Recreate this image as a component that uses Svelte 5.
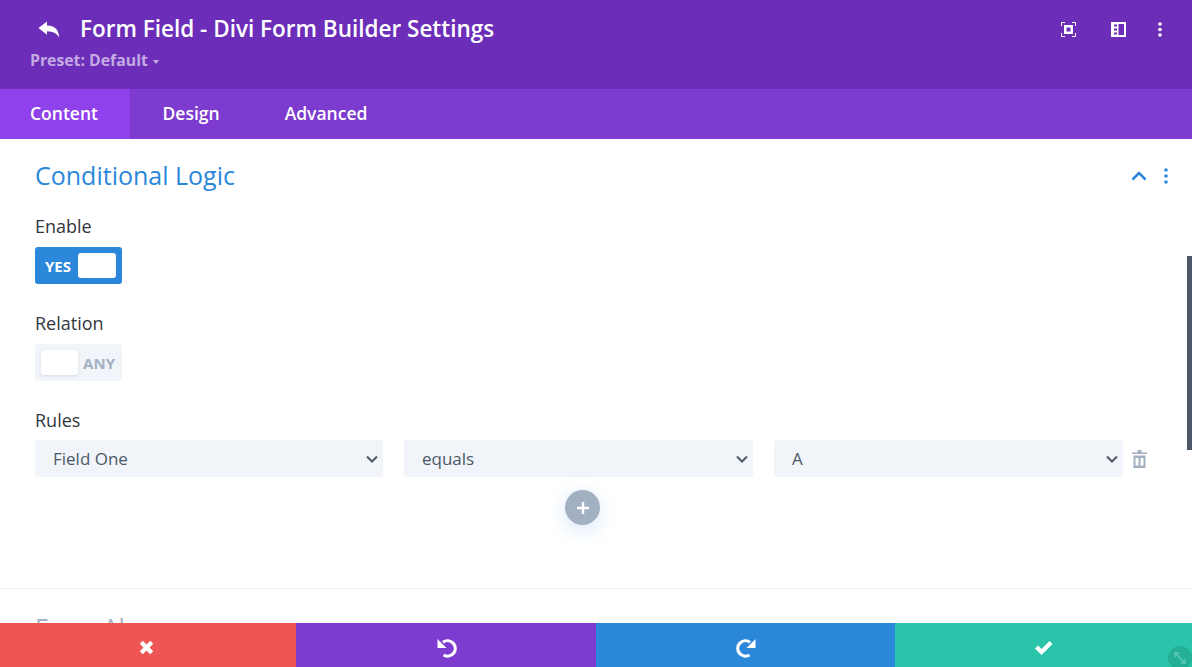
<script>
	let enabled = $state(true);

	const rules = [
		{ value: 'Field One', options: ['Field One', 'Field Two'] },
		{ value: 'equals', options: ['equals', 'does not equal'] },
		{ value: 'A', options: ['A', 'B', 'C'] }
	];
</script>

<div class="panel">
	<header class="head">
		<div class="title-row">
			<button class="icon back" aria-label="Back">
				<svg width="22" height="17" viewBox="0 0 22 17"><path fill="#fff" d="M0.5 7 9 0.5V4.6C16.5 4.8 21 8.5 21 16.5 18.8 12.4 15 10.4 9 10.3V13.8Z" /></svg>
			</button>
			<h1>Form Field - Divi Form Builder Settings</h1>
			<div class="actions">
				<button class="icon" aria-label="Focus">
					<svg width="15" height="15" viewBox="0 0 15 15" fill="none" stroke="#fff"><path d="M.5 4V.5H4M11 .5h3.500V4M14.500 11v3.500H11M4 14.500H.5V11" /><rect x="4.250" y="4.250" width="6.500" height="6.500" stroke-width="2.500" /></svg>
				</button>
				<button class="icon" aria-label="Sidebar">
					<svg width="15" height="15" viewBox="0 0 15 15"><path fill="#fff" fill-rule="evenodd" d="M0 0h15v15H0ZM7.500 2v11H13V2ZM3 2.500v2h3v-2ZM3 6.500v2h3v-2ZM3 10.500v2h3v-2Z" /></svg>
				</button>
				<button class="icon dots" aria-label="More">
					<svg width="4" height="15" viewBox="0 0 4 15" fill="#fff"><circle cx="2" cy="2" r="1.800" /><circle cx="2" cy="7.500" r="1.800" /><circle cx="2" cy="13" r="1.800" /></svg>
				</button>
			</div>
		</div>
		<div class="preset">Preset: Default <span class="caret"></span></div>
	</header>

	<nav class="tabs">
		<span class="tab active">Content</span>
		<span class="tab">Design</span>
		<span class="tab">Advanced</span>
	</nav>

	<main class="body">
		<section class="group">
			<div class="group-head">
				<h2>Conditional Logic</h2>
				<svg class="chevron" width="16" height="10" viewBox="0 0 16 10" fill="none" stroke="#2b87da" stroke-width="2.500"><path d="M1.500 8.500 8 2l6.500 6.500" /></svg>
				<svg width="4" height="16" viewBox="0 0 4 16" fill="#2b87da"><circle cx="2" cy="2" r="1.800" /><circle cx="2" cy="8" r="1.800" /><circle cx="2" cy="14" r="1.800" /></svg>
			</div>

			<div class="field">
				<span class="label">Enable</span>
				<button class="toggle on" onclick={() => (enabled = !enabled)}>
					<span class="toggle-text">YES</span>
					<span class="knob"></span>
				</button>
			</div>

			<div class="field">
				<span class="label">Relation</span>
				<button class="toggle">
					<span class="knob"></span>
					<span class="toggle-text">ANY</span>
				</button>
			</div>

			<div class="field">
				<span class="label">Rules</span>
				<div class="rule">
					<div class="selects">
						{#each rules as rule}
							<select value={rule.value}>
								{#each rule.options as option}
									<option>{option}</option>
								{/each}
							</select>
						{/each}
					</div>
					<svg width="15" height="18" viewBox="0 0 15 18" fill="#a3b0c2"><path fill-rule="evenodd" d="M5.500 0h4v2.500H15V4H0V2.500h5.500ZM1.500 5.500h12V18h-12ZM3.500 8v7.500h3V8ZM8.500 8v7.500h3V8Z" /></svg>
				</div>
				<button class="add" aria-label="Add rule">
					<svg width="12" height="12" viewBox="0 0 12 12"><path fill="#fff" d="M4.800 0h2.400v4.800H12v2.400H7.200V12H4.800V7.200H0V4.800h4.800Z" /></svg>
				</button>
			</div>
		</section>

		<section class="group closed">
			<h2>Form Alarms</h2>
		</section>
	</main>

	<footer class="bar">
		<button class="cancel" aria-label="Cancel">
			<svg width="15" height="15" viewBox="0 0 16 16"><path fill="#fff" d="M4 .8 8 4.800 12 .8 15.200 4 11.200 8l4 4L12 15.200l-4-4-4 4L.8 12l4-4-4-4Z" /></svg>
		</button>
		<button class="undo" aria-label="Undo">
			<svg width="20" height="20" viewBox="0 0 20 20"><path fill="none" stroke="#fff" stroke-width="3.200" d="M6 4.200A7.700 7.700 0 1 1 6.500 17" /><path fill="#fff" d="M.5 1 9.500 10H.5Z" /></svg>
		</button>
		<button class="redo" aria-label="Redo">
			<svg width="20" height="20" viewBox="0 0 20 20"><path fill="none" stroke="#fff" stroke-width="3.200" d="M14 4.200A7.700 7.700 0 1 0 13.500 17" /><path fill="#fff" d="M19.500 1 10.500 10H19.500Z" /></svg>
		</button>
		<button class="save" aria-label="Save">
			<svg width="18" height="14" viewBox="0 0 18 14"><path fill="#fff" d="M0 7.500 3 4.500l3.500 3.500L14.500 0l3 3L6.500 14Z" /></svg>
		</button>
		<span class="resize">
			<svg width="14" height="14" viewBox="0 0 14 14" fill="none" stroke="#5cc9b4" stroke-width="1.500"><path d="M2 2l10 10M2 6V2h4M12 8v4H8" /></svg>
		</span>
	</footer>

	<div class="scrollbar"></div>
</div>

<style>
	:global(body) {
		margin: 0;
		overflow: hidden;
		font-family: "Open Sans", sans-serif;
	}

	.panel {
		position: relative;
		display: flex;
		flex-direction: column;
		height: 667px;
		overflow: hidden;
		background: #fff;
	}

	button {
		padding: 0;
		border: 0;
		background: none;
		font: inherit;
		cursor: pointer;
	}

	.icon {
		display: flex;
		align-items: center;
		justify-content: center;
	}

	.head {
		height: 89px;
		box-sizing: border-box;
		padding: 13px 30px 0;
		background: #6c2eb9;
		color: #fff;
	}

	.title-row {
		display: flex;
		align-items: center;
		height: 30px;
	}

	.back {
		margin: 2px 20px 0 8px;
	}

	h1 {
		margin: 2px 0 0;
		font-size: 22.500px;
		font-weight: 600;
		line-height: 30px;
	}

	.actions {
		display: flex;
		align-items: center;
		gap: 35px;
		margin-top: 2px;
		margin-left: auto;
	}

	.dots {
		margin-left: -3px;
	}

	.preset {
		margin-top: 6px;
		font-size: 15.800px;
		font-weight: 700;
		line-height: 22px;
		color: rgba(255, 255, 255, 0.6);
	}

	.caret {
		display: inline-block;
		margin-left: 1px;
		vertical-align: 2px;
		border: 3px solid transparent;
		border-top: 4px solid rgba(255, 255, 255, 0.6);
		border-bottom: 0;
	}

	.tabs {
		display: flex;
		height: 50px;
		background: #7d3bcf;
	}

	.tab {
		padding: 0 32.500px;
		font-size: 17.500px;
		font-weight: 600;
		line-height: 48px;
		color: #fff;
	}

	.tab.active {
		width: 130px;
		box-sizing: border-box;
		padding: 0 0 0 30px;
		background: #8f42ec;
	}

	.body {
		flex: 1;
		min-height: 0;
		overflow: hidden;
	}

	.group {
		height: 450px;
		box-sizing: border-box;
		padding: 20px 45px 0 35px;
		border-bottom: 1px solid #f1f5f9;
	}

	.group.closed {
		height: auto;
		border-bottom: 0;
		padding-top: 21px;
	}

	.closed h2 {
		margin: 0;
		color: #a3b0c2;
	}

	.group-head {
		display: flex;
		align-items: center;
		height: 34px;
		margin-right: -21px;
	}

	h2 {
		margin: -2px 0 0;
		font-size: 25px;
		font-weight: 400;
		line-height: 34px;
		color: #2b87da;
	}

	.chevron {
		margin-left: auto;
		margin-right: 17px;
	}

	.field {
		margin-top: 27px;
	}

	.group-head + .field {
		margin-top: 21px;
	}

	.label {
		display: block;
		margin-bottom: 9px;
		font-size: 18px;
		line-height: 24px;
		color: #32373c;
	}

	.toggle {
		display: flex;
		align-items: center;
		justify-content: space-between;
		width: 87px;
		height: 37px;
		box-sizing: border-box;
		padding: 0 7px 0 6px;
		border-radius: 3px;
		background: #f1f5f9;
		color: #a3b0c2;
	}

	.toggle.on {
		padding: 0 6px 0 10px;
		background: #2b87da;
		color: #fff;
	}

	.toggle-text {
		font-size: 15px;
		font-weight: 700;
	}

	.knob {
		width: 37px;
		height: 25px;
		border-radius: 3px;
		background: #fff;
		box-shadow: 0 1px 3px rgba(43, 87, 130, 0.15);
	}

	.on .knob {
		width: 38px;
		box-shadow: none;
	}

	.rule {
		display: flex;
		align-items: center;
		gap: 9px;
		margin-top: -1px;
	}

	.selects {
		display: grid;
		flex: 1;
		grid-template-columns: 348px 349px 349px;
		gap: 21px;
	}

	select {
		appearance: none;
		width: 100%;
		height: 37px;
		padding: 0 14px 0 18px;
		border: 0;
		border-radius: 3px;
		background: #f1f5f9 url("data:image/svg+xml,%3Csvg xmlns='http://www.w3.org/2000/svg' width='12' height='8'%3E%3Cpath d='M1 1.500l5 5 5-5' fill='none' stroke='%234c5866' stroke-width='2'/%3E%3C/svg%3E") no-repeat right 5px center;
		font: 17px "Open Sans", sans-serif;
		color: #4c5866;
		outline: 0;
	}

	.add {
		display: flex;
		align-items: center;
		justify-content: center;
		width: 35px;
		height: 35px;
		margin: 13px 0 0 530px;
		border-radius: 50%;
		background: #a3b0c2;
		box-shadow: 0 5px 20px rgba(43, 135, 218, 0.2);
	}

	.bar {
		position: absolute;
		left: 0;
		right: 0;
		bottom: 0;
		display: grid;
		grid-template-columns: 296px 300px 299px 1fr;
		height: 44px;
	}

	.bar button {
		display: flex;
		align-items: center;
		justify-content: center;
		padding-top: 5px;
	}

	.cancel { background: #ef5555; padding-right: 3px; }
	.undo { background: #7d3bcf; padding-left: 2px; }
	.redo { background: #2b87da; padding-left: 1px; }
	.save { background: #29c4a9; }

	.resize {
		position: absolute;
		right: 0;
		bottom: -3px;
		display: flex;
		align-items: center;
		justify-content: center;
		width: 24px;
		height: 24px;
		border-radius: 50%;
		background: rgba(0, 0, 0, 0.1);
	}

	.scrollbar {
		position: absolute;
		top: 256px;
		right: 0;
		width: 5px;
		height: 194px;
		background: #4c5866;
	}
</style>
